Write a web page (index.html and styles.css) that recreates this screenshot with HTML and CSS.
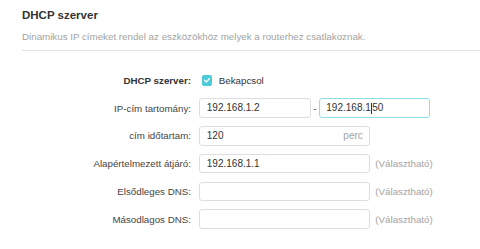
FILE: index.html
```html
<!DOCTYPE html>
<html lang="hu">
<head>
<meta charset="utf-8">
<link rel="stylesheet" href="styles.css">
</head>
<body>
<div class="page">
  <h1 class="title">DHCP szerver</h1>
  <p class="desc">Dinamikus IP címeket rendel az eszközökhöz melyek a routerhez csatlakoznak.</p>
  <div class="divider"></div>
  <div class="form">
    <div class="row">
      <div class="label bold">DHCP szerver:</div>
      <div class="field">
        <span class="checkbox"><svg viewBox="0 0 10 10" width="10" height="10"><path d="M2.6 5.2 L4.4 6.9 L7.5 3.6" fill="none" stroke="#fff" stroke-width="1.4" stroke-linecap="round" stroke-linejoin="round"/></svg></span>
        <span class="check-label">Bekapcsol</span>
      </div>
    </div>
    <div class="row">
      <div class="label">IP-cím tartomány:</div>
      <div class="field">
        <div class="input short">192.168.1.2</div>
        <span class="dash">-</span>
        <div class="input short focus">192.168.1<span class="caret"></span>50</div>
      </div>
    </div>
    <div class="row">
      <div class="label">cím időtartam:</div>
      <div class="field">
        <div class="input long"><span class="val">120</span><span class="unit">perc</span></div>
      </div>
    </div>
    <div class="row">
      <div class="label">Alapértelmezett átjáró:</div>
      <div class="field">
        <div class="input long">192.168.1.1</div>
        <span class="hint">(Választható)</span>
      </div>
    </div>
    <div class="row">
      <div class="label">Elsődleges DNS:</div>
      <div class="field">
        <div class="input long"></div>
        <span class="hint">(Választható)</span>
      </div>
    </div>
    <div class="row">
      <div class="label">Másodlagos DNS:</div>
      <div class="field">
        <div class="input long"></div>
        <span class="hint">(Választható)</span>
      </div>
    </div>
  </div>
</div>
</body>
</html>
```
FILE: styles.css
```css
html, body {
  margin: 0;
  padding: 0;
  background: #fff;
}
body {
  font-family: "Liberation Sans", Arial, Helvetica, sans-serif;
  color: #333;
}
.page {
  padding: 8px 0 0 22px;
}
.title {
  margin: 0;
  font-size: 11.5px;
  line-height: 14px;
  font-weight: bold;
  color: #333;
}
.desc {
  margin: 9px 0 0 0;
  font-size: 9.75px;
  line-height: 12px;
  color: #a3a3a3;
}
.divider {
  margin-top: 6.5px;
  height: 1px;
  background: #e3e3e3;
}
.form {
  margin-top: 16px;
}
.row {
  display: flex;
  align-items: center;
  height: 27.75px;
}
.label {
  width: 169px;
  text-align: right;
  font-size: 9.75px;
  color: #444;
  flex: none;
}
.label.bold {
  font-weight: bold;
  color: #333;
}
.field {
  display: flex;
  align-items: center;
  margin-left: 8.3px;
}
.checkbox {
  width: 10.5px;
  height: 10.5px;
  margin-left: 2.5px;
  border-radius: 2px;
  background: #4ccbd6;
  display: flex;
  align-items: center;
  justify-content: center;
}
.check-label {
  margin-left: 6.5px;
  font-size: 9.75px;
  color: #333;
}
.input {
  box-sizing: border-box;
  height: 19.5px;
  border: 1px solid #dedede;
  border-radius: 3px;
  padding: 0 6.5px;
  font-size: 10px;
  line-height: 17.5px;
  color: #333;
  display: flex;
  align-items: center;
}
.input.short {
  width: 111.5px;
}
.input.long {
  width: 171px;
}
.input.focus {
  border-color: #8fdfe6;
}
.caret {
  display: inline-block;
  width: 1px;
  height: 11px;
  background: #333;
  margin: 0 0.2px;
}
.dash {
  width: 8px;
  text-align: center;
  font-size: 10px;
  color: #666;
}
.val {
  flex: 1;
}
.unit {
  color: #a3a3a3;
}
.hint {
  margin-left: 5px;
  font-size: 9.75px;
  color: #a3a3a3;
}
```
